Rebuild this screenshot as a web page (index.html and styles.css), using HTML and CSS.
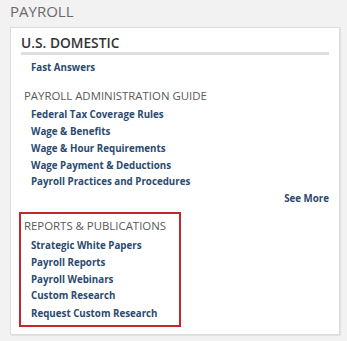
FILE: index.html
```html
<!DOCTYPE html>
<html>
<head>
<meta charset="utf-8">
<link rel="stylesheet" href="styles.css">
</head>
<body>
<h1 class="page-title">PAYROLL</h1>
<div class="panel">
  <h2 class="panel-title">U.S. DOMESTIC</h2>
  <ul class="links first">
    <li><a href="#">Fast Answers</a></li>
  </ul>
  <h3 class="section-title">PAYROLL ADMINISTRATION GUIDE</h3>
  <ul class="links">
    <li><a href="#">Federal Tax Coverage Rules</a></li>
    <li><a href="#">Wage &amp; Benefits</a></li>
    <li><a href="#">Wage &amp; Hour Requirements</a></li>
    <li><a href="#">Wage Payment &amp; Deductions</a></li>
    <li><a href="#">Payroll Practices and Procedures</a></li>
  </ul>
  <div class="see-more"><a href="#">See More</a></div>
  <div class="highlight">
    <h3 class="section-title">REPORTS &amp; PUBLICATIONS</h3>
    <ul class="links">
      <li><a href="#">Strategic White Papers</a></li>
      <li><a href="#">Payroll Reports</a></li>
      <li><a href="#">Payroll Webinars</a></li>
      <li><a href="#">Custom Research</a></li>
      <li class="last"><a href="#">Request Custom Research</a></li>
    </ul>
  </div>
</div>
</body>
</html>
```
FILE: styles.css
```css
html, body {
  margin: 0;
  padding: 0;
}
body {
  background: #f2f2f2;
  font-family: "Open Sans", "Liberation Sans", sans-serif;
  width: 347px;
  height: 341px;
  overflow: hidden;
}
.page-title {
  margin: 0;
  padding: 0 0 0 10px;
  font-size: 15px;
  line-height: 22px;
  font-weight: 400;
  color: #6a6a6a;
  height: 26px;
}
.panel {
  margin: 1px 7px 0 10px;
  background: #fff;
  border: 1px solid #dcdcdc;
  box-shadow: 1px 1px 1px rgba(0,0,0,0.06);
  padding: 6px 10px 7px 10px;
}
.panel-title {
  margin: 0;
  font-size: 13.75px;
  line-height: 18px;
  font-weight: 600;
  color: #333;
  border-bottom: 3px solid #dedede;
}
.links {
  list-style: none;
  margin: 0;
  padding: 0 0 0 10px;
}
.links.first {
  margin-top: 5px;
}
.links li {
  font-size: 9.75px;
  line-height: 16.75px;
  font-weight: 700;
}
.links li.last {
  margin-top: 1px;
}
.links a {
  color: #2b4a6f;
  text-decoration: none;
}
.section-title {
  margin: 10px 0 2.5px 0;
  padding-left: 3px;
  font-size: 11.4px;
  line-height: 18px;
  font-weight: 400;
  color: #5a5a5a;
}
.see-more {
  text-align: right;
  font-size: 9.75px;
  line-height: 15.5px;
  font-weight: 700;
}
.see-more a {
  color: #2b4a6f;
  text-decoration: none;
}
.highlight {
  margin: 5px 0 0 -2px;
  width: 158px;
  border: 2px solid #c1272d;
  padding: 0 0 2px 0;
}
.highlight .section-title {
  margin: 3px 0 3.5px 0;
  padding-left: 3px;
}
.highlight .links {
  padding-left: 10px;
}
```
